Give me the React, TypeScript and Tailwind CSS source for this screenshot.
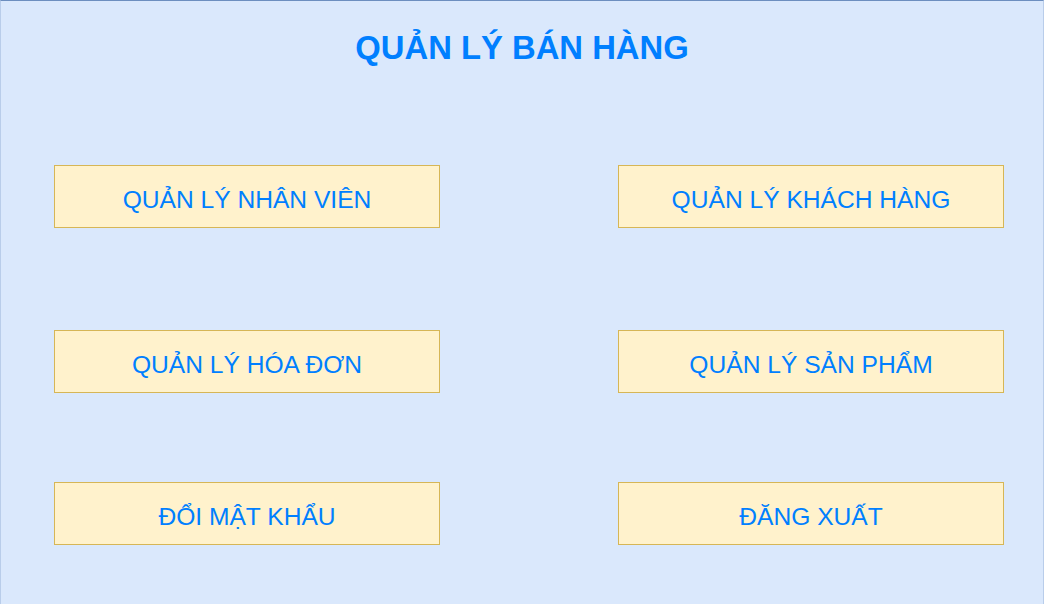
const rows: string[][] = [
  ["QUẢN LÝ NHÂN VIÊN", "QUẢN LÝ KHÁCH HÀNG"],
  ["QUẢN LÝ HÓA ĐƠN", "QUẢN LÝ SẢN PHẨM"],
  ["ĐỔI MẬT KHẨU", "ĐĂNG XUẤT"],
];

const rowGaps = ["mt-[97px]", "mt-[102px]", "mt-[89px]"];

const MenuButton = ({ label }: { label: string }) => {
  return (
    <button className="w-[386px] h-[63px] flex items-center justify-center pt-[7px] border border-[#d6b656] bg-[#fff2cc] text-[24.6px] text-[#007fff] cursor-pointer">
      {label}
    </button>
  );
};

export default function App() {
  return (
    <div
      className="w-[1044px] h-[604px] bg-[#dae8fc] border-t border-t-[#6c8ebf] border-x border-x-[#b9cdea] flex flex-col"
      style={{ fontFamily: '"Liberation Sans", Arial, sans-serif' }}
    >
      <h1 className="mt-[27px] h-[40px] leading-[40px] text-center text-[32.8px] font-bold text-[#007fff]">
        QUẢN LÝ BÁN HÀNG
      </h1>
      <div className="flex flex-col pl-[53px]">
        {rows.map((row, i) => (
          <div key={i} className={"flex gap-[178px] " + rowGaps[i]}>
            {row.map((label) => (
              <MenuButton key={label} label={label} />
            ))}
          </div>
        ))}
      </div>
    </div>
  );
}
